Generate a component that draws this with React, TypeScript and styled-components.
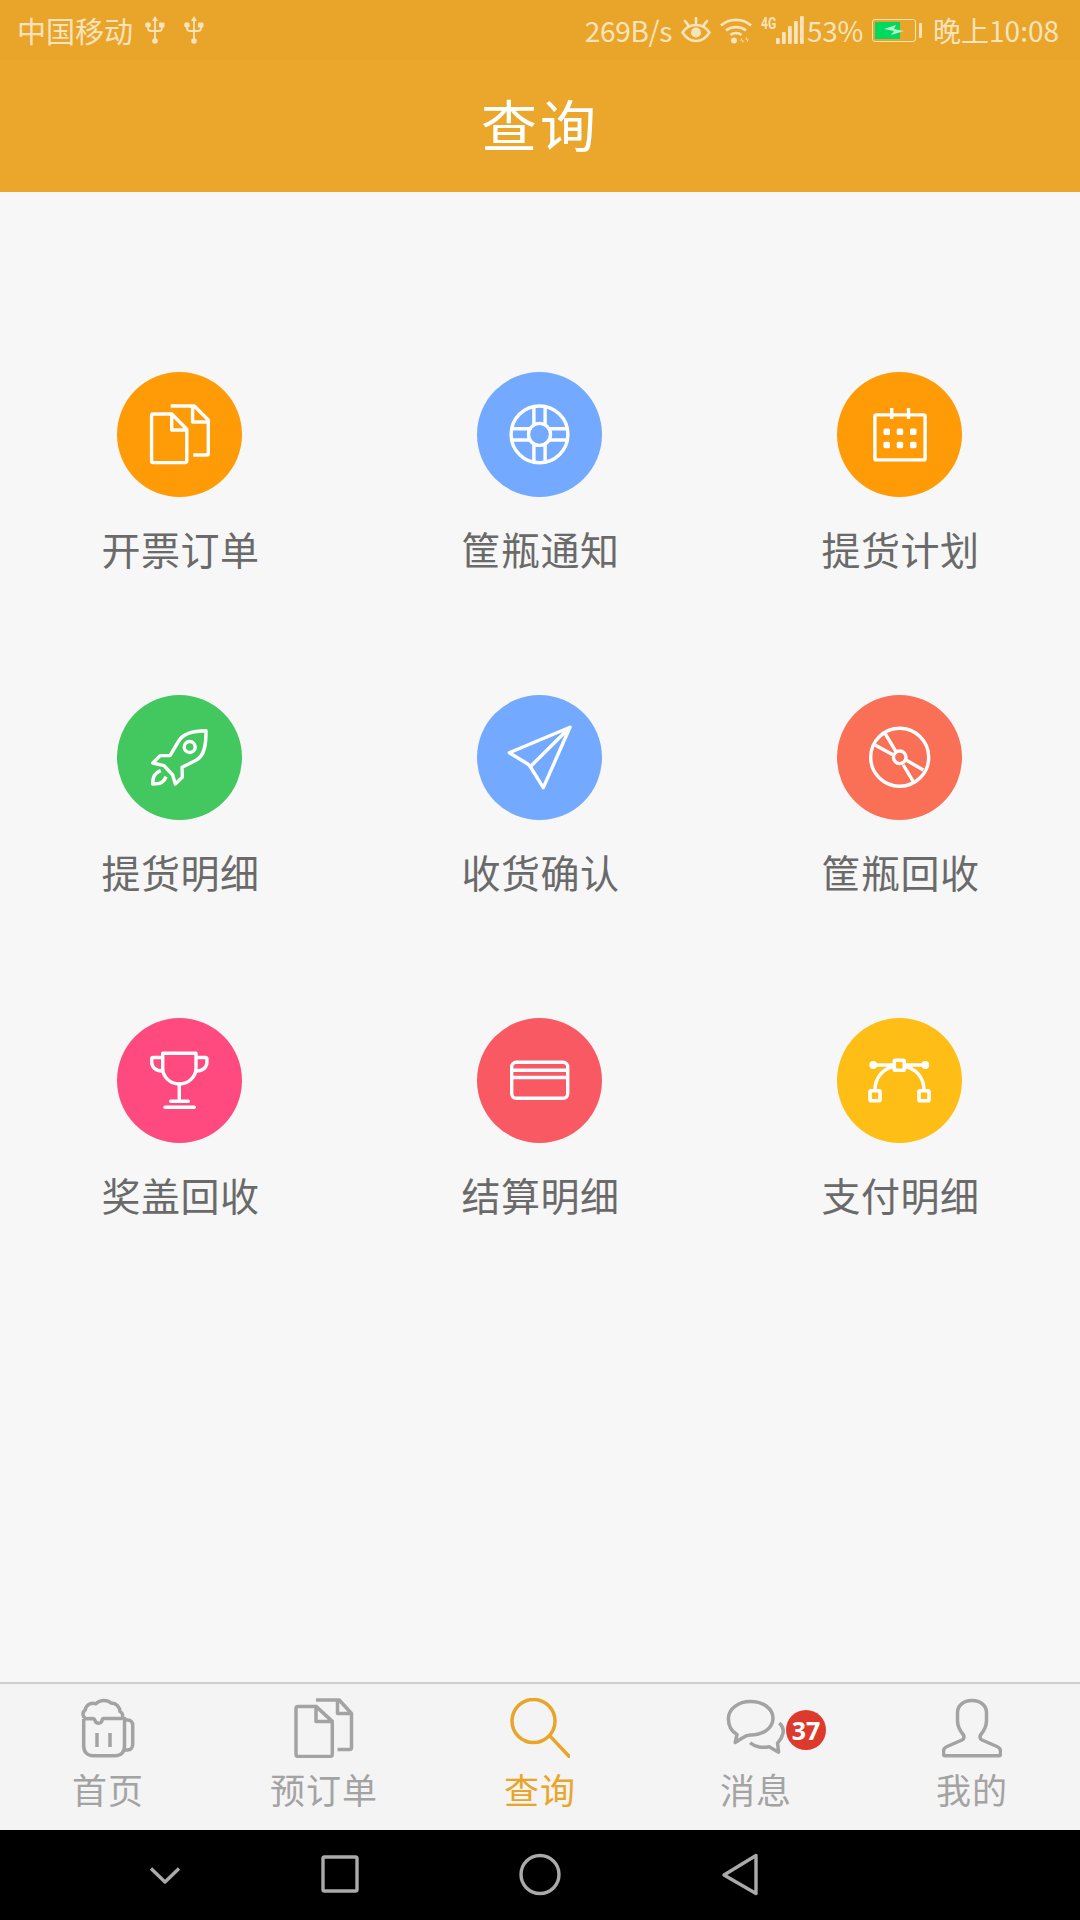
import React from "react";
import styled, { createGlobalStyle } from "styled-components";

const GlobalStyle = createGlobalStyle`
  html, body {
    margin: 0;
    padding: 0;
    background: #f7f7f7;
  }
  * {
    box-sizing: border-box;
  }
`;

const FONT = `"Noto Sans", "Noto Sans CJK SC", sans-serif`;
const CJK = `"Noto Sans CJK SC", sans-serif`;

// icons are drawn on the 125px circle
const menuIcons = {
  files: (
    <>
      <path d="M54.7 42H36.2a1.6 1.6 0 0 0-1.6 1.6v45.4a1.6 1.6 0 0 0 1.6 1.6h32a1.6 1.6 0 0 0 1.6-1.6V57.2L54.7 42v16h15" />
      <path d="M53.7 34h23.6l14 14v33.4a1.6 1.6 0 0 1-1.6 1.6H76.3M75.6 34v16h15.7" />
    </>
  ),
  buoy: (
    <>
      <circle cx="62.5" cy="62.4" r="28.4" />
      <circle cx="62.5" cy="62.4" r="11" />
      <path d="M56.9 35v18M68.1 35v18M56.9 72v18M68.1 72v18M35 56.8h18M35 68h18M72 56.8h18M72 68h18" />
    </>
  ),
  calendar: (
    <>
      <rect x="37.9" y="42.9" width="50.2" height="45" rx="1.5" />
      <path d="M54.7 36v11M71.5 36v11" />
      <g fill="#fff" stroke="none">
        <rect x="46.5" y="56.5" width="6.5" height="6.5" rx="1.6" />
        <rect x="59.7" y="56.5" width="6.5" height="6.5" rx="1.6" />
        <rect x="73" y="56.5" width="6.5" height="6.5" rx="1.6" />
        <rect x="46.5" y="69.8" width="6.5" height="6.5" rx="1.6" />
        <rect x="59.7" y="69.8" width="6.5" height="6.5" rx="1.6" />
        <rect x="73" y="69.8" width="6.5" height="6.5" rx="1.6" />
      </g>
    </>
  ),
  rocket: (
    <>
      <path d="M89 35.7C78 35.8 67 37.5 62 45.5L53 60.6H43.2l-7.4 7.4L47 70.6l8.7 9.4 2.6 9 7-6.7-.2-10L79 65.2C87.4 61 89.2 50 89 35.7z" />
      <circle cx="72.7" cy="52" r="5.5" />
      <path d="M43.7 75.7C38 78 35.7 81 35.7 89c7 0 11-1 13.3-7.3" />
    </>
  ),
  plane: (
    <path d="M93 32.3 32.3 57.7 50 68.5c1.5 1 2.5 2 3.5 3.5l12.8 20.6zM93 32.3 53 72" />
  ),
  disc: (
    <>
      <circle cx="62.7" cy="62.3" r="29" />
      <circle cx="62.7" cy="62.3" r="6.3" />
      <path d="M38 50l18.3 10M48 38.3l11 18.4M69 65l17.3 10M66.3 70l10 16.7" />
    </>
  ),
  trophy: (
    <>
      <path d="M45.7 35.3H79v15c0 8-7 15.7-16.7 15.7S45.7 58.3 45.7 50.3z" />
      <path d="M45.7 39.5H36a1.3 1.3 0 0 0-1.3 1.3V44c0 5 3.8 9 10.6 9M79 39.5h9.7a1.3 1.3 0 0 1 1.3 1.3V44c0 5-3.8 9-10.6 9" />
      <path d="M62.3 66v17M53.7 83.3h17.6M48 89.3h29.3" strokeLinecap="round" />
    </>
  ),
  card: (
    <>
      <rect x="34.7" y="44.3" width="56" height="36" rx="4.5" />
      <path d="M34.7 52.3h56M34.7 59.5h56" />
    </>
  ),
  bezier: (
    <>
      <path d="M36.3 47h21M67.3 47h21M38 72C38 59 47 50 57.3 48.5M87 72C87 59 78 50 67.3 48.5" />
      <rect x="57.3" y="42.3" width="10" height="10" rx="1" strokeWidth="3.6" />
      <rect x="33" y="72.7" width="10" height="10" rx="1" strokeWidth="3.6" />
      <rect x="82" y="72.7" width="10" height="10" rx="1" strokeWidth="3.6" />
      <circle cx="36.3" cy="47" r="2.2" fill="#fff" />
      <circle cx="88.3" cy="47" r="2.2" fill="#fff" />
    </>
  ),
};

const menu: { label: string; color: string; icon: keyof typeof menuIcons }[] = [
  { label: "开票订单", color: "#ff9b07", icon: "files" },
  { label: "筐瓶通知", color: "#73a9ff", icon: "buoy" },
  { label: "提货计划", color: "#ff9b07", icon: "calendar" },
  { label: "提货明细", color: "#42c85f", icon: "rocket" },
  { label: "收货确认", color: "#73a9ff", icon: "plane" },
  { label: "筐瓶回收", color: "#f97056", icon: "disc" },
  { label: "奖盖回收", color: "#fe4a7e", icon: "trophy" },
  { label: "结算明细", color: "#f95963", icon: "card" },
  { label: "支付明细", color: "#febe16", icon: "bezier" },
];

const tabIcons = {
  beer: (
    <>
      <path d="M5.7 21v27c0 6 3.5 9.7 9.5 9.7h22c6 0 9.3-3.7 9.3-9.7V19" />
      <path d="M46.8 22h2.7c3.3 0 5.2 2.3 5.2 5.5v19c0 3.3-2 5.5-5.2 5.5h-2.7" />
      <path d="M8 20.8C4.3 19 4 14 7.2 12c.8-5 6-8 10.8-6.2 3-4 11-4.7 15-.8 5-.2 8.8 3.8 9 8.5 3 1.5 3.6 5 1.5 7H25.500c-.8 0-1.200.8-1.500 2-.6 3.500-6 3.500-7 0-.4-1.400-1-2-2.500-2z" />
      <path d="M19 35v14M32 35v14" />
    </>
  ),
  files: (
    <>
      <path d="M22 8.4H4a2 2 0 0 0-2 2v46a2 2 0 0 0 2 2h32.3a2 2 0 0 0 2-2V23.4L22 8.4v15h16.3" />
      <path d="M22 2h23.2L57.500 15.500v34a2 2 0 0 1-2 2h-12M43.500 2v13.500h14" />
    </>
  ),
  search: (
    <>
      <circle cx="23.5" cy="23" r="21.5" />
      <path d="M40.3 38.4 59 58.2" strokeLinecap="round" />
    </>
  ),
  chat: (
    <>
      <path d="M11 36.5C5.5 33.5 2.4 28 2.4 20.8 2.400 10.500 12.400 3.500 24.700 3.500S47 10.500 47 20.300 37 37 24.700 37c-3 0-5.500 1-8 2.700l-7.500 4.800z" />
      <path d="M53.300 25c3.300 3 4.700 7 3.500 11-.8 3.500-2.800 6.500-5.200 9.200l1 9-9.500-5.500c-6 1.500-14 .5-19-4" />
    </>
  ),
  person: (
    <path d="M30 2.500C21 2.500 15.500 8 15.500 14.500v8c0 6 3 11 6 14.500.8 2 .5 4-1.500 5L5 48.500c-2.500 1-3.500 2.500-3.500 4.500v3c0 1 .8 1.800 1.800 1.800h53.400c1 0 1.800-.8 1.800-1.800v-3c0-2-1-3.500-3.500-4.500L40 42c-2-1-2.300-3-1.500-5 3-3.500 6-8.500 6-14.500v-8C44.500 8 39 2.500 30 2.500z" />
  ),
};

const tabs: { label: string; icon: keyof typeof tabIcons; active?: boolean; badge?: number }[] = [
  { label: "首页", icon: "beer" },
  { label: "预订单", icon: "files" },
  { label: "查询", icon: "search", active: true },
  { label: "消息", icon: "chat", badge: 37 },
  { label: "我的", icon: "person" },
];

const UsbIcon = () => (
  <svg width="20" height="28" viewBox="0 0 20 28">
    <path d="M10 0 13 5H7z" fill="currentColor" />
    <path d="M10 4v19M3 9v3c0 2 1 3 3 3h8c2 0 3-1 3-3V9" fill="none" stroke="currentColor" strokeWidth="1.8" />
    <circle cx="3" cy="9" r="2.8" fill="currentColor" />
    <rect x="14" y="6.5" width="5.5" height="5" rx="1" fill="currentColor" />
    <circle cx="10" cy="25" r="2.8" fill="currentColor" />
  </svg>
);

const App = () => {
  return (
    <>
      <GlobalStyle />
      <Page>
        <StatusBar>
          <StatusGroup>
            <Carrier>中国移动</Carrier>
            <UsbSlot>
              <UsbIcon />
            </UsbSlot>
            <UsbSlot>
              <UsbIcon />
            </UsbSlot>
          </StatusGroup>
          <StatusGroup>
            <StatusText>269B/s</StatusText>
            <svg width="30" height="26" viewBox="0 0 30 26" fill="none" stroke="currentColor">
              <path d="M1.5 15.5C5 10 10 8 15 8s10 2 13.5 7.5C25 21 20 24 15 24S5 21 1.5 15.5z" strokeWidth="2.6" />
              <circle cx="15" cy="15.5" r="5" fill="currentColor" stroke="none" />
              <path d="M4 4l3.5 4.500M15 1v5M26 4l-3.500 4.500" strokeWidth="2.600" strokeLinecap="round" />
            </svg>
            <svg width="32" height="27" viewBox="0 0 32 27" fill="none" stroke="currentColor" strokeWidth="2.800">
              <path d="M1 8.500C9 1 23 1 31 8.500M6 13.500c5.500-4.500 14.500-4.500 20 0M10.500 18c3-2.400 8-2.400 11 0" />
              <circle cx="14" cy="23.500" r="3" fill="currentColor" stroke="none" />
              <path d="M22 26v-5l-2 2.500h4zM27 20v5l2-2.500h-4z" fill="currentColor" stroke="none" />
            </svg>
            <Signal>
              <SignalLabel>4G</SignalLabel>
              <svg width="28" height="28" viewBox="0 0 28 28" fill="currentColor">
                <rect x="0" y="22" width="3.800" height="6" rx="1" />
                <rect x="6" y="16" width="3.800" height="12" rx="1" />
                <rect x="12" y="10" width="3.800" height="18" rx="1" />
                <rect x="18" y="5" width="3.800" height="23" rx="1" />
                <rect x="24" y="0" width="3.800" height="28" rx="1" />
              </svg>
            </Signal>
            <StatusText>53%</StatusText>
            <Battery>
              <BatteryShell>
                <BatteryFill style={{ width: "60%" }} />
                <BatteryBolt width="22" height="12" viewBox="0 0 22 12">
                  <path d="M1 5 13 1 11 5 21 7 8 11 11 7z" fill="#b4f4c8" />
                </BatteryBolt>
              </BatteryShell>
              <BatteryNub />
            </Battery>
            <Clock>晚上10:08</Clock>
          </StatusGroup>
        </StatusBar>
        <Header>查询</Header>
        <Main>
          <Grid>
            {menu.map((item) => (
              <Item key={item.label}>
                <Circle $color={item.color}>
                  <svg width="125" height="125" viewBox="0 0 125 125" fill="none" stroke="#fff" strokeWidth="3.400" strokeLinejoin="round">
                    {menuIcons[item.icon]}
                  </svg>
                </Circle>
                <Label>{item.label}</Label>
              </Item>
            ))}
          </Grid>
        </Main>
        <TabBar>
          {tabs.map((tab) => (
            <Tab key={tab.label} $active={tab.active}>
              <svg width="60" height="60" viewBox="0 0 60 60" fill="none" stroke="currentColor" strokeWidth="3.500" strokeLinejoin="round">
                {tabIcons[tab.icon]}
              </svg>
              <TabLabel>{tab.label}</TabLabel>
              {tab.badge && <Badge>{tab.badge}</Badge>}
            </Tab>
          ))}
        </TabBar>
        <NavBar>
          <svg width="60" height="60" viewBox="0 0 60 60" fill="none" stroke="#aaa" strokeWidth="3.400" strokeLinejoin="round">
            <path d="M16 23.500 30 37l14-13.500" />
          </svg>
          <svg width="60" height="60" viewBox="0 0 60 60" fill="none" stroke="#aaa" strokeWidth="3.400" strokeLinejoin="round">
            <rect x="13" y="12" width="34" height="34" rx="1.500" />
          </svg>
          <svg width="60" height="60" viewBox="0 0 60 60" fill="none" stroke="#aaa" strokeWidth="3.400">
            <circle cx="30" cy="29.500" r="19" />
          </svg>
          <svg width="60" height="60" viewBox="0 0 60 60" fill="none" stroke="#aaa" strokeWidth="3.400" strokeLinejoin="round">
            <path d="M14 30 46 10.500v38z" />
          </svg>
        </NavBar>
      </Page>
    </>
  );
};

const Page = styled.div`
  display: flex;
  flex-direction: column;
  width: 1080px;
  height: 1920px;
  overflow: hidden;
  background: #f7f7f7;
  font-family: ${FONT};
`;
const StatusBar = styled.div`
  display: flex;
  flex-shrink: 0;
  align-items: center;
  justify-content: space-between;
  height: 60px;
  padding: 0 21px 0 17px;
  background: #e9a52a;
  color: #f9e3bd;
`;
const StatusGroup = styled.div`
  display: flex;
  align-items: center;
  gap: 9px;
`;
const Carrier = styled.span`
  font-family: ${CJK};
  font-size: 29px;
  line-height: 60px;
`;
const UsbSlot = styled.span`
  display: flex;
  margin-left: 3px;
  margin-right: 7px;
`;
const StatusText = styled.span`
  font-family: ${CJK};
  font-size: 28px;
  line-height: 60px;
  letter-spacing: -0.3px;
`;
const Signal = styled.div`
  display: flex;
  align-items: flex-start;
  margin-right: -6px;
`;
const SignalLabel = styled.span`
  width: 15px;
  font-family: "Roboto", sans-serif;
  font-size: 17px;
  font-weight: 700;
  line-height: 14px;
  transform: scaleX(0.72);
  transform-origin: left top;
`;
const Battery = styled.div`
  display: flex;
  align-items: center;
  gap: 3px;
`;
const BatteryShell = styled.div`
  position: relative;
  width: 44px;
  height: 23px;
  border: 1.5px solid #f9e3bd;
  border-radius: 3px;
`;
const BatteryFill = styled.div`
  position: absolute;
  left: 2px;
  top: 2px;
  bottom: 2px;
  background: #00d95f;
`;
const BatteryBolt = styled.svg`
  position: absolute;
  left: 10px;
  top: 4px;
`;
const BatteryNub = styled.div`
  width: 3px;
  height: 15px;
  border-radius: 1px;
  background: #f9e3bd;
`;
const Clock = styled.span`
  margin-left: 2px;
  font-family: ${CJK};
  font-size: 28px;
  line-height: 60px;
`;
const Header = styled.header`
  display: flex;
  flex-shrink: 0;
  align-items: center;
  justify-content: center;
  height: 132px;
  padding-bottom: 8px;
  background: #eba72c;
  color: #fff;
  font-family: ${CJK};
  font-size: 56px;
  letter-spacing: 3px;
`;
const Main = styled.main`
  flex: 1;
  padding-top: 180px;
`;
const Grid = styled.div`
  display: grid;
  grid-template-columns: repeat(3, 360px);
  grid-auto-rows: 323px;
  margin-left: -1px;
`;
const Item = styled.div`
  display: flex;
  flex-direction: column;
  align-items: center;
`;
const Circle = styled.div<{ $color: string }>`
  width: 125px;
  height: 125px;
  border-radius: 50%;
  background: ${(p) => p.$color};
  svg {
    display: block;
  }
`;
const Label = styled.div`
  margin-top: 26px;
  margin-left: 3px;
  color: #6a6a6a;
  font-family: ${CJK};
  font-size: 39px;
  line-height: 50px;
  letter-spacing: 0.5px;
`;
const TabBar = styled.nav`
  display: flex;
  flex-shrink: 0;
  height: 148px;
  border-top: 2px solid #cdcdcd;
  background: #f4f4f4;
`;
const Tab = styled.div<{ $active?: boolean }>`
  position: relative;
  display: flex;
  flex: 1;
  flex-direction: column;
  align-items: center;
  padding-top: 14px;
  color: ${(p) => (p.$active ? "#e9a52a" : "#a3a3a3")};
  svg {
    display: block;
  }
`;
const TabLabel = styled.div`
  margin-top: 9px;
  font-family: ${CJK};
  font-size: 35px;
  line-height: 44px;
  letter-spacing: 1px;
`;
const Badge = styled.span`
  position: absolute;
  left: 138px;
  top: 26px;
  width: 40px;
  height: 40px;
  border-radius: 50%;
  background: #dd3a2e;
  color: #fff;
  font-size: 25px;
  font-weight: 700;
  line-height: 40px;
  text-align: center;
`;
const NavBar = styled.div`
  display: grid;
  flex-shrink: 0;
  grid-template-columns: 175px 200px 200px 60px;
  align-items: center;
  height: 90px;
  padding-left: 135px;
  background: #000;
`;

export default App;
